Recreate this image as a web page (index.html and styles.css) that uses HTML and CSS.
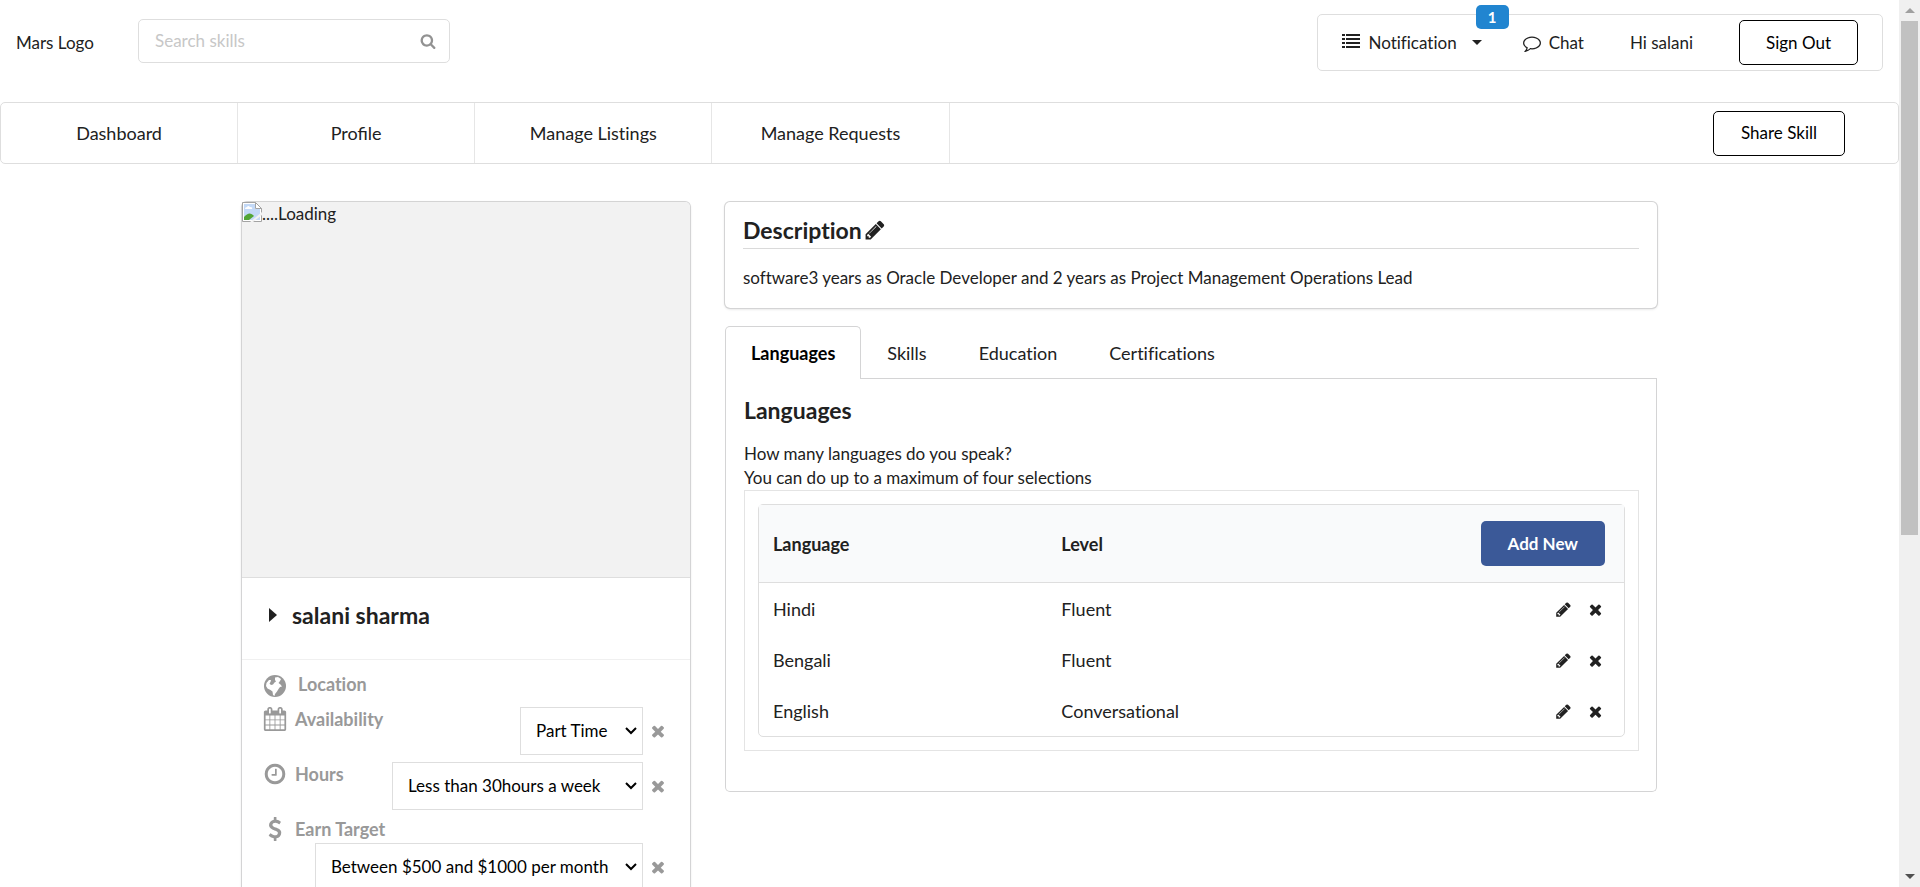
FILE: index.html
```html
<!DOCTYPE html>
<html lang="en">
<head>
<meta charset="utf-8">
<title>Profile</title>
<link rel="stylesheet" href="styles.css">
</head>
<body>
<svg class="sprite" aria-hidden="true">
  <symbol id="pencil" viewBox="0 0 1792 1792"><path d="M491 1536l91-91-235-235-91 91v107h128v128h107zm523-928q0-22-22-22-10 0-17 7l-542 542q-7 7-7 17 0 22 22 22 10 0 17-7l542-542q7-7 7-17zm-54-192l416 416-832 832h-416v-416zm683 96q0 53-37 90l-166 166-416-416 166-165q36-38 90-38 53 0 91 38l235 234q37 39 37 91z"/></symbol>
  <symbol id="remove" viewBox="0 0 1792 1792"><path d="M1490 1322q0 40-28 68l-136 136q-28 28-68 28t-68-28l-294-294-294 294q-28 28-68 28t-68-28l-136-136q-28-28-28-68t28-68l294-294-294-294q-28-28-28-68t28-68l136-136q28-28 68-28t68 28l294 294 294-294q28-28 68-28t68 28l136 136q28 28 28 68t-28 68l-294 294 294 294q28 28 28 68z"/></symbol>
  <symbol id="search" viewBox="0 0 1792 1792"><path d="M1216 832q0-185-131.5-316.5t-316.5-131.5-316.5 131.5-131.5 316.5 131.5 316.5 316.5 131.5 316.5-131.5 131.5-316.5zm512 832q0 52-38 90t-90 38q-54 0-90-38l-343-342q-179 124-399 124-143 0-273.5-55.5t-225-150-150-225-55.5-273.5 55.5-273.5 150-225 225-150 273.5-55.5 273.5 55.5 225 150 150 225 55.5 273.5q0 220-124 399l343 343q37 37 37 90z"/></symbol>
  <symbol id="list" viewBox="0 0 18 14"><path d="M0 0h3v2H0zM4 0h14v2H4zM0 4h3v2H0zM4 4h14v2H4zM0 8h3v2H0zM4 8h14v2H4zM0 12h3v2H0zM4 12h14v2H4z"/></symbol>
  <symbol id="comment" viewBox="0 0 1792 1792"><path d="M896 384q-204 0-381.5 69.5t-282 187.5-104.5 255q0 112 71.5 213.5t201.5 175.5l87 50-27 96q-24 91-70 172 152-63 275-171l43-38 57 6q69 8 130 8 204 0 381.5-69.5t282-187.5 104.5-255-104.5-255-282-187.5-381.5-69.5zm896 512q0 174-120 321.5t-326 233-450 85.5q-70 0-145-8-198 175-460 242-49 14-114 22h-5q-15 0-27-10.500t-16-27.500v-1q-3-4-.5-12t2-10 4.500-9.500l6-9 7-8.500 8-9q7-8 31-34.500t34.500-38 31-39.500 32.500-51 27-59 26-76q-157-89-247.500-220t-90.500-281q0-174 120-321.500t326-233 450-85.500 450 85.500 326 233 120 321.500z"/></symbol>
  <symbol id="calendar" viewBox="0 0 1792 1792"><path d="M192 1664h288v-288h-288v288zm352 0h320v-288h-320v288zm-352-352h288v-320h-288v320zm352 0h320v-320h-320v320zm-352-384h288v-288h-288v288zm736 736h320v-288h-320v288zm-384-736h320v-288h-320v288zm768 736h288v-288h-288v288zm-384-352h320v-320h-320v320zm-352-864v-288q0-13-9.500-22.500t-22.500-9.500h-64q-13 0-22.500 9.500t-9.500 22.500v288q0 13 9.500 22.500t22.500 9.500h64q13 0 22.500-9.500t9.500-22.500zm736 864h288v-320h-288v320zm-384-384h320v-288h-320v288zm384 0h288v-288h-288v288zm32-480v-288q0-13-9.500-22.500t-22.500-9.500h-64q-13 0-22.500 9.500t-9.500 22.500v288q0 13 9.500 22.500t22.500 9.500h64q13 0 22.500-9.500t9.500-22.500zm384-64v1280q0 52-38 90t-90 38h-1408q-52 0-90-38t-38-90v-1280q0-52 38-90t90-38h128v-96q0-66 47-113t113-47h64q66 0 113 47t47 113v96h384v-96q0-66 47-113t113-47h64q66 0 113 47t47 113v96h128q52 0 90 38t38 90z"/></symbol>
  <symbol id="clock" viewBox="0 0 1792 1792"><path d="M1024 544v448q0 14-9 23t-23 9h-320q-14 0-23-9t-9-23v-64q0-14 9-23t23-9h224v-352q0-14 9-23t23-9h64q14 0 23 9t9 23zm416 352q0-148-73-273t-198-198-273-73-273 73-198 198-73 273 73 273 198 198 273 73 273-73 198-198 73-273zm224 0q0 209-103 385.500t-279.500 279.500-385.500 103-385.500-103-279.500-279.500-103-385.500 103-385.500 279.500-279.500 385.500-103 385.500 103 279.500 279.500 103 385.500z"/></symbol>
  <symbol id="dollar" viewBox="0 0 1792 1792"><path d="M1362 1185q0 153-99.500 263.500t-258.500 136.500v175q0 14-9 23t-23 9h-135q-13 0-22.500-9.500t-9.500-22.500v-175q-66-9-127.500-31t-101.500-44.500-74-48-46.500-37.500-17.500-18q-17-21-2-41l103-135q7-10 23-12 15-2 24 9l2 2q113 99 243 125 37 8 74 8 81 0 142.500-43t61.500-122q0-28-15-53t-33.500-42-58.500-37.500-66-32-80-32.500q-39-16-61.500-25t-61.500-26.500-62.500-31-56.500-35.500-53.500-42.500-43.500-49-35.500-58-21-66.500-8.500-78q0-138 98-242t255-134v-180q0-13 9.500-22.500t22.500-9.500h135q14 0 23 9t9 23v176q57 6 110.500 23t87 33.500 63.500 37.500 39 29 15 14q17 18 5 38l-81 146q-8 15-23 16-14 3-27-7-3-3-14.500-12t-39-26.500-58.500-32-74.500-26-85.500-11.500q-95 0-155 43t-60 111q0 26 8.500 48t29.500 41.500 39.500 33 56 31 60.500 27 70 27.500q53 20 81 31.500t76 35 75.500 42.500 62 50 53 63.500 31.500 76.500 13 94z"/></symbol>
  <symbol id="globe" viewBox="0 0 22 22"><circle cx="11" cy="11" r="11"/><path fill="#fff" d="M11 2.500l3-.500 3 2-1 2-1.500 2 2 1.500 1.500 2-2 .5-1.500 2-1.500 2.500-2 2.500-.5 2-1.500-1-.5-3.500-2-1.500-3-1.500-1.500-2.500.5-3 2.500-3 2 0-.5 2-1 1.500 1.500 1.500 2-.5 1.500-2 1.500-1-1-1.500z"/></symbol>
  <symbol id="chevron" viewBox="0 0 12 8"><path fill="none" stroke="currentColor" stroke-width="2" d="M1 1l5 5 5-5"/></symbol>
</svg>
<div class="window">
  <div class="page">
    <header class="top">
      <a class="logo" href="#">Mars Logo</a>
      <form class="search">
        <input type="text" placeholder="Search skills" aria-label="Search skills">
        <svg class="search-icon"><use href="#search"/></svg>
      </form>
      <nav class="account">
        <button class="notify" type="button">
          <svg class="list-icon"><use href="#list"/></svg>Notification<span class="caret"></span>
          <span class="badge">1</span>
        </button>
        <a class="chat" href="#"><svg class="chat-icon"><use href="#comment"/></svg>Chat</a>
        <span class="hello">Hi salani</span>
        <button class="outline" type="button">Sign Out</button>
      </nav>
    </header>
    <nav class="menu">
      <a href="#">Dashboard</a>
      <a class="joined" href="#">Profile</a>
      <a href="#">Manage Listings</a>
      <a href="#">Manage Requests</a>
      <button class="outline share" type="button">Share Skill</button>
    </nav>
    <main class="content">
      <aside class="card">
        <div class="photo">
          <svg class="broken" viewBox="0 0 20 20"><path fill="#fff" stroke="#a3a3a3" d="M.5.500h13l6 6v13H.5z"/><path fill="#c3d9f7" d="M2 2h11v5h5v11H2z"/><path fill="#fff" d="M3 7q0-2 2-2 1-2 3 0 3 0 2 2z"/><path fill="#52a535" d="M2 18v-3q5-6 9-2l1 1-5 4z"/><path fill="#f2f2f2" d="M20 10v3l-9 7H8z"/><path fill="#fff" stroke="#a3a3a3" d="M13.500.500v6h6z"/></svg><span>....Loading</span>
        </div>
        <div class="person"><span class="fold"></span><h2>salani sharma</h2></div>
        <div class="facts">
          <div class="fact location"><svg class="fact-icon"><use href="#globe"/></svg><strong>Location</strong></div>
          <div class="fact"><svg class="fact-icon"><use href="#calendar"/></svg><label for="availability">Availability</label>
            <div class="pick"><span class="drop"><select id="availability"><option>Part Time</option><option>Full Time</option></select><svg><use href="#chevron"/></svg></span><button type="button" aria-label="Cancel availability"><svg><use href="#remove"/></svg></button></div></div>
          <div class="fact"><svg class="fact-icon"><use href="#clock"/></svg><label for="hours">Hours</label>
            <div class="pick"><span class="drop"><select id="hours"><option>Less than 30hours a week</option><option>More than 30hours a week</option></select><svg><use href="#chevron"/></svg></span><button type="button" aria-label="Cancel hours"><svg><use href="#remove"/></svg></button></div></div>
          <div class="fact wrap"><svg class="fact-icon"><use href="#dollar"/></svg><label for="target">Earn Target</label>
            <div class="pick"><span class="drop"><select id="target"><option>Between $500 and $1000 per month</option></select><svg><use href="#chevron"/></svg></span><button type="button" aria-label="Cancel earn target"><svg><use href="#remove"/></svg></button></div></div>
        </div>
      </aside>
      <div class="details">
        <section class="description">
          <h2>Description<svg class="edit-title"><use href="#pencil"/></svg></h2>
          <p>software3 years as Oracle Developer and 2 years as Project Management Operations Lead</p>
        </section>
        <nav class="tabs">
          <a class="active" href="#">Languages</a>
          <a href="#">Skills</a>
          <a href="#">Education</a>
          <a href="#">Certifications</a>
        </nav>
        <section class="panel">
          <h2>Languages</h2>
          <p>How many languages do you speak?<br>You can do up to a maximum of four selections</p>
          <div class="frame">
            <table>
              <thead><tr><th class="third">Language</th><th class="third">Level</th><th class="actions"><button class="add" type="button">Add New</button></th></tr></thead>
              <tbody>
                <tr><td>Hindi</td><td>Fluent</td><td class="actions"><button type="button" aria-label="Edit Hindi"><svg><use href="#pencil"/></svg></button><button type="button" aria-label="Remove Hindi"><svg><use href="#remove"/></svg></button></td></tr>
                <tr><td>Bengali</td><td>Fluent</td><td class="actions"><button type="button" aria-label="Edit Bengali"><svg><use href="#pencil"/></svg></button><button type="button" aria-label="Remove Bengali"><svg><use href="#remove"/></svg></button></td></tr>
                <tr><td>English</td><td>Conversational</td><td class="actions"><button type="button" aria-label="Edit English"><svg><use href="#pencil"/></svg></button><button type="button" aria-label="Remove English"><svg><use href="#remove"/></svg></button></td></tr>
              </tbody>
            </table>
          </div>
        </section>
      </div>
    </main>
  </div>
  <div class="scrollbar" aria-hidden="true"><span class="arrow up"></span><span class="thumb"></span><span class="arrow down"></span></div>
</div>
</body>
</html>
```
FILE: styles.css
```css
*, *::before, *::after { box-sizing: border-box; }
body {
  margin: 0;
  font: 17px/24px Lato, "Liberation Sans", sans-serif;
  font-variant-ligatures: none;
  color: #212121;
  background: #fff;
}
a { color: inherit; text-decoration: none; }
button, input, select { font: inherit; color: inherit; font-variant-ligatures: none; }
button { background: none; border: 0; padding: 0; }
h2, p { margin: 0; }
h2 { font-size: 23px; line-height: 26px; font-weight: 700; }
svg { fill: currentColor; flex: none; }
.sprite { position: absolute; width: 0; height: 0; }

.window { display: flex; height: 100vh; overflow: hidden; }
.page { flex: 1; min-width: 0; }

/* Header */
.top { display: flex; align-items: center; padding: 14px 16px 31px; }
.logo { width: 122px; }
.search { display: flex; align-items: center; position: relative; width: 312px; margin-bottom: 4px; }
.search input {
  width: 100%;
  height: 44px;
  padding: 0 48px 0 16px;
  border: 1px solid #dedede;
  border-radius: 5px;
}
.search input::placeholder { color: #c7c7c7; opacity: 1; }
.search-icon { position: absolute; right: 14px; width: 16px; height: 16px; color: #929292; }
.account {
  display: flex;
  align-items: center;
  margin-left: auto;
  height: 57px;
  padding: 0 24px;
  border: 1px solid #dedede;
  border-radius: 5px;
}
.notify { position: relative; display: flex; align-items: center; }
.list-icon { width: 18px; height: 14px; margin-right: 8px; margin-bottom: 3px; }
.caret { border: 5px solid transparent; border-top-color: currentColor; border-bottom: 0; margin-left: 15px; }
.badge {
  position: absolute;
  right: -27px;
  top: -26px;
  width: 33px;
  height: 24px;
  border-radius: 5px;
  background: #2185d0;
  color: #fff;
  font-size: 15px;
  font-weight: 700;
}
.chat { display: flex; align-items: center; margin-left: 41px; }
.chat-icon { width: 18px; height: 18px; margin-right: 8px; }
.hello { margin: 0 46px; }
.outline {
  height: 45px;
  padding: 0 26px;
  border: 1px solid #000;
  border-radius: 5px;
  color: #000;
}

/* Main menu */
.menu { display: flex; align-items: center; height: 62px; border: 1px solid #dedede; border-radius: 5px; }
.menu a {
  display: flex;
  align-items: center;
  justify-content: center;
  width: 12.5%;
  height: 100%;
  border-right: 1px solid #e6e6e6;
  font-size: 18px;
}
.menu .joined { font-variant-ligatures: normal; }
.share { margin-left: auto; margin-right: 53px; padding: 0 27px; }

/* Columns */
.content {
  display: grid;
  grid-template-columns: minmax(0, 448fr) minmax(0, 932fr);
  gap: 35px;
  width: calc(100% - 32px);
  max-width: 1415px;
  margin: 38px auto 0;
  align-items: start;
}

/* Profile card */
.card { border-radius: 5px; box-shadow: 0 1px 3px #d4d4d5, 0 0 0 1px #d4d4d5; }
.photo { display: flex; height: 376px; border-radius: 5px 5px 0 0; border-bottom: 1px solid #dedede; background: #f2f2f2; }
.broken { width: 20px; height: 20px; }
.person { display: flex; align-items: center; height: 82px; padding: 0 27px 8px; border-bottom: 1px solid #f0f0f0; }
.fold { border: 7px solid transparent; border-left: 8px solid currentColor; border-right: 0; margin-right: 15px; }
.facts { padding: 12px 23px 18px 21px; color: #999; font-size: 18px; }
.fact { display: flex; margin-bottom: 7px; }
.fact label { font-weight: 700; }
.fact-icon { width: 24px; height: 24px; margin-right: 8px; }
.location { margin-bottom: 10px; }
.location .fact-icon { width: 22px; height: 22px; margin: 3px 12px 0 1px; }
.wrap { flex-wrap: wrap; }
.wrap .pick { margin-top: 2px; }
.pick { display: flex; align-items: center; margin-left: auto; }
.drop { position: relative; display: flex; align-items: center; color: #000; }
.drop select {
  height: 48px;
  padding: 0 33px 0 15px;
  border: 1px solid #dedede;
  border-radius: 0;
  background: #fff;
  appearance: none;
  font-size: 17px;
}
.drop svg { position: absolute; right: 6px; width: 12px; height: 8px; pointer-events: none; }
.pick button { display: flex; margin-left: 6px; }
.pick button svg { width: 18px; height: 18px; }

/* Description */
.description { padding: 15px 18px 18px; border-radius: 5px; box-shadow: 0 1px 3px #d4d4d5, 0 0 0 1px #d4d4d5; }
.description h2 { display: flex; align-items: center; padding-bottom: 5px; border-bottom: 1px solid #dadada; }
.description p { padding: 17px 0 0; }
.edit-title { width: 22px; height: 22px; margin-left: 2px; }

/* Tabs */
.tabs { display: flex; margin-top: 18px; border-bottom: 1px solid #d4d4d5; font-size: 18px; }
.tabs a { padding: 14px 25px 13px; border: 1px solid transparent; border-bottom: 0; }
.tabs .active {
  margin-bottom: -1px;
  border-color: #d4d4d5;
  border-radius: 5px 5px 0 0;
  background: #fff;
  color: #000;
  font-weight: 700;
}
.panel { padding: 18px 17px 40px 18px; border: 1px solid #d4d4d5; border-top: 0; border-radius: 0 0 5px 5px; }
.panel p { padding-top: 19px; }
.frame { padding: 13px; border: 1px solid #e4e4e4; }
table { width: 100%; table-layout: fixed; border: 1px solid #dedede; border-radius: 5px; border-spacing: 0; font-size: 18px; }
th, td { padding: 0 14px; text-align: left; }
th { height: 78px; background: #f9fafb; border-bottom: 1px solid #dedede; }
td { height: 51px; }
.third { width: calc(100% / 3); }
.actions { text-align: right; padding-right: 19px; }
td.actions { padding-right: 20px; padding-bottom: 3px; }
.actions svg { display: block; width: 17px; height: 17px; }
.actions button { display: inline-block; vertical-align: middle; margin-left: 15px; }
.actions .add {
  height: 45px;
  padding: 0 27px;
  border-radius: 5px;
  background: #3b5998;
  color: #fff;
  font-size: 17px;
  font-weight: 700;
}

/* Scrollbar */
.scrollbar { display: flex; flex-direction: column; align-items: center; width: 21px; background: #f0f0f0; }
.arrow { display: flex; align-items: center; justify-content: center; height: 21px; }
.arrow::before { content: ""; border: 5px solid transparent; }
.up::before { border-bottom-color: #a0a0a0; border-top: 0; }
.down::before { border-top-color: #505050; border-bottom: 0; }
.thumb { width: 17px; height: 58%; background: #c1c1c1; margin-bottom: auto; }
```
